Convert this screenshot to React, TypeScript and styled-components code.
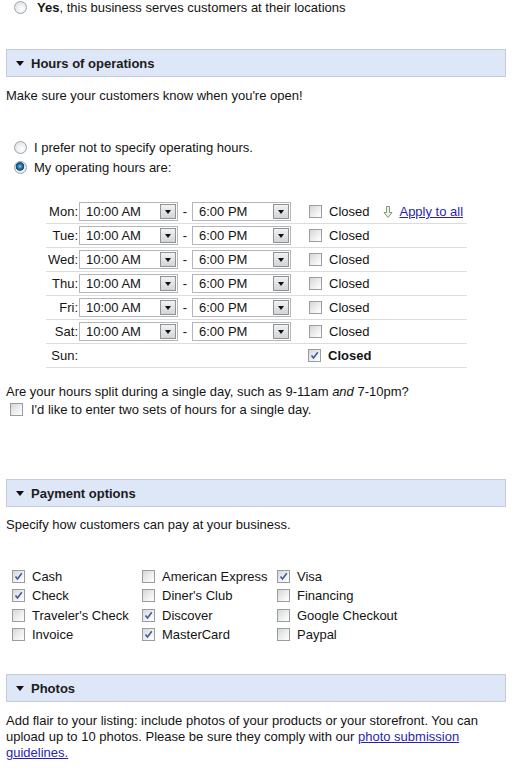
import React, { FC } from 'react'
import styled, { createGlobalStyle } from 'styled-components'

const GlobalStyle = createGlobalStyle`
  body {
    margin: 0;
    background: #fff;
    font-family: 'Liberation Sans', Arial, sans-serif;
    font-size: 13px;
    color: #141414;
  }
`

const Page = styled.div`
  width: 514px;
  box-sizing: border-box;
  padding: 0 8px 0 6px;
`

const OptionRow = styled.div<{ $h?: number; $gap?: number; $indent?: number; $top?: number }>`
  display: flex;
  align-items: center;
  height: ${(p) => p.$h ?? 20}px;
  gap: ${(p) => p.$gap ?? 7}px;
  padding-left: ${(p) => p.$indent ?? 8}px;
  margin-top: ${(p) => p.$top ?? 0}px;
  line-height: 15px;
  white-space: nowrap;
`

const Radio = styled.span<{ $checked?: boolean }>`
  flex: none;
  width: 11px;
  height: 11px;
  border-radius: 50%;
  border: 1px solid #9ba3ad;
  background: ${(p) =>
    p.$checked
      ? 'radial-gradient(circle at 45% 40%, #8fd0ef 0, #2a7bb0 2px, #14476e 4px, #e6e9ec 4.6px, #f6f7f8 100%)'
      : 'radial-gradient(circle at 60% 65%, #ffffff 0, #e4e6e8 70%, #cfd2d6 100%)'};
`

const Box = styled.span`
  flex: none;
  display: inline-flex;
  align-items: center;
  justify-content: center;
  width: 11px;
  height: 11px;
  border: 1px solid #9a9c9e;
  background: linear-gradient(135deg, #d4d6d8 0%, #eeeff0 55%, #ffffff 100%);
`

const Check: FC<{ checked?: boolean }> = ({ checked }) => (
  <Box>
    {checked && (
      <svg width='9' height='9' viewBox='0 0 9 9'>
        <path d='M1.5 4.5 L3.5 7 L7.8 1.2' fill='none' stroke='#3f5c99' strokeWidth='1.6' />
      </svg>
    )}
  </Box>
)

const SectionHeader = styled.div<{ $top: number }>`
  display: flex;
  align-items: center;
  gap: 7px;
  height: 26px;
  margin-top: ${(p) => p.$top}px;
  padding-left: 9px;
  background: #dee7f8;
  border: 1px solid #c5ccd8;
  font-weight: bold;
  color: #1b1b1b;
`

const Caret = styled.span`
  width: 0;
  height: 0;
  border-left: 4.5px solid transparent;
  border-right: 4.5px solid transparent;
  border-top: 5px solid #111;
`

const Note = styled.p<{ $top: number; $lh?: number }>`
  margin: ${(p) => p.$top}px 0 0;
  line-height: ${(p) => p.$lh ?? 15}px;
`

const Link = styled.a`
  color: #2a1fb0;
  text-decoration: underline;
  cursor: pointer;
`

const HoursTable = styled.div`
  width: 421px;
  margin: 23px 0 0 40px;
`

const HoursRow = styled.div`
  display: flex;
  align-items: center;
  height: 23px;
  border-bottom: 1px solid #dcdcdc;
  white-space: nowrap;
`

const DayLabel = styled.span`
  width: 32px;
  text-align: right;
  margin-right: 1px;
`

const TimeSelect = styled.span`
  display: flex;
  align-items: center;
  justify-content: space-between;
  box-sizing: border-box;
  width: 99px;
  height: 19px;
  padding: 0 1px 0 6px;
  border: 1px solid #b3b7bc;
  background: #fff;
`

const SelectButton = styled.span`
  display: flex;
  align-items: center;
  justify-content: center;
  box-sizing: border-box;
  width: 16px;
  height: 15px;
  border: 1px solid #8f9396;
  background: linear-gradient(#f2f2f2, #d3d4d6);
  &::after {
    content: '';
    border-left: 3.5px solid transparent;
    border-right: 3.5px solid transparent;
    border-top: 4px solid #111;
  }
`

const Dash = styled.span`
  width: 14px;
  text-align: center;
`

const Spacer = styled.span<{ $w: number }>`
  flex: none;
  width: ${(p) => p.$w}px;
`

const Closed = styled.span<{ $bold?: boolean }>`
  margin-left: 7px;
  font-weight: ${(p) => (p.$bold ? 'bold' : 'normal')};
`

const Apply = styled.span`
  display: flex;
  align-items: center;
  gap: 5px;
  margin-left: 13px;
`

const PayGrid = styled.div`
  display: grid;
  grid-template-columns: 130px 135px 1fr;
  grid-auto-rows: 19.33px;
  margin-top: 35px;
  padding-left: 6px;
`

const PayItem = styled.div`
  display: flex;
  align-items: center;
  gap: 7px;
  white-space: nowrap;
`

const days = ['Mon', 'Tue', 'Wed', 'Thu', 'Fri', 'Sat']

const payments: [string, boolean][] = [
  ['Cash', true], ['American Express', false], ['Visa', true],
  ['Check', true], ["Diner's Club", false], ['Financing', false],
  ["Traveler's Check", false], ['Discover', true], ['Google Checkout', false],
  ['Invoice', false], ['MasterCard', true], ['Paypal', false]
]

const Time: FC<{ value: string }> = ({ value }) => (
  <TimeSelect>
    <span>{value}</span>
    <SelectButton />
  </TimeSelect>
)

const App: FC = () => (
  <Page>
    <GlobalStyle />
    <OptionRow $h={15} $gap={10}>
      <Radio />
      <span><b>Yes</b>, this business serves customers at their locations</span>
    </OptionRow>

    <SectionHeader $top={34}>
      <Caret />
      Hours of operations
    </SectionHeader>
    <Note $top={11}>Make sure your customers know when you're open!</Note>

    <OptionRow $top={34}>
      <Radio />
      <span>I prefer not to specify operating hours.</span>
    </OptionRow>
    <OptionRow>
      <Radio $checked />
      <span>My operating hours are:</span>
    </OptionRow>

    <HoursTable>
      {days.map((d, i) => (
        <HoursRow key={d}>
          <DayLabel>{d}:</DayLabel>
          <Time value='10:00 AM' />
          <Dash>-</Dash>
          <Time value='6:00 PM' />
          <Spacer $w={18} />
          <Check />
          <Closed>Closed</Closed>
          {i === 0 && (
            <Apply>
              <svg width='12' height='14' viewBox='0 0 12 14'>
                <path d='M4.5 1.5 H7.5 V7.5 H10 L6 12.5 L2 7.5 H4.5 Z' fill='#eef3ea' stroke='#7f9a72' strokeWidth='1' />
              </svg>
              <Link>Apply to all</Link>
            </Apply>
          )}
        </HoursRow>
      ))}
      <HoursRow>
        <DayLabel>Sun:</DayLabel>
        <Spacer $w={229} />
        <Check checked />
        <Closed $bold>Closed</Closed>
      </HoursRow>
    </HoursTable>

    <Note $top={16}>Are your hours split during a single day, such as 9-11am <i>and</i> 7-10pm?</Note>
    <OptionRow $h={18} $gap={8} $indent={4} $top={1}>
      <Check />
      <span>I'd like to enter two sets of hours for a single day.</span>
    </OptionRow>

    <SectionHeader $top={61}>
      <Caret />
      Payment options
    </SectionHeader>
    <Note $top={10}>Specify how customers can pay at your business.</Note>

    <PayGrid>
      {payments.map(([name, on]) => (
        <PayItem key={name}>
          <Check checked={on} />
          <span>{name}</span>
        </PayItem>
      ))}
    </PayGrid>

    <SectionHeader $top={30}>
      <Caret />
      Photos
    </SectionHeader>
    <Note $top={11} $lh={16}>
      Add flair to your listing: include photos of your products or your storefront. You can
      upload up to 10 photos. Please be sure they comply with our <Link>photo submission guidelines.</Link>
    </Note>
  </Page>
)

export default App
